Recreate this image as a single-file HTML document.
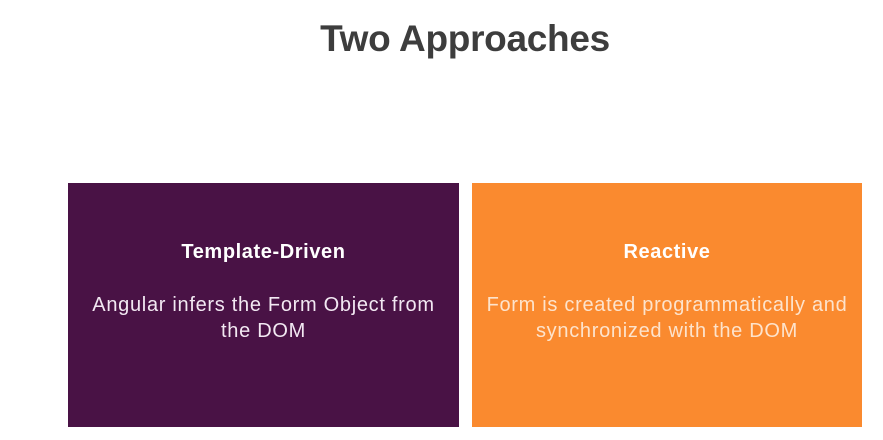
<!DOCTYPE html>
<html><head><style>
body{margin:0;width:883px;height:440px;background:#fff;font-family:"Liberation Sans",sans-serif;position:relative;overflow:hidden}
h1{position:absolute;left:0;width:930px;top:18px;margin:0;text-align:center;font-size:37px;font-weight:bold;color:#3d3d3d;letter-spacing:-0.3px}
.b{position:absolute;top:183px;height:244px;color:#fff;text-align:center}
.t{position:absolute;top:58px;width:100%;font-size:20px;font-weight:bold;letter-spacing:0.6px}
.p{position:absolute;top:109px;width:100%;font-size:20px;line-height:26px;color:#f2e8f2;letter-spacing:0.7px}
</style></head><body>
<h1>Two Approaches</h1>
<div class="b" style="left:68px;width:391px;background:#491245"><div class="t">Template-Driven</div><div class="p">Angular infers the Form Object from<br>the DOM</div></div>
<div class="b" style="left:472px;width:390px;background:#fa8a2f"><div class="t">Reactive</div><div class="p" style="color:#fde3cc">Form is created programmatically and<br>synchronized with the DOM</div></div>
</body></html>
